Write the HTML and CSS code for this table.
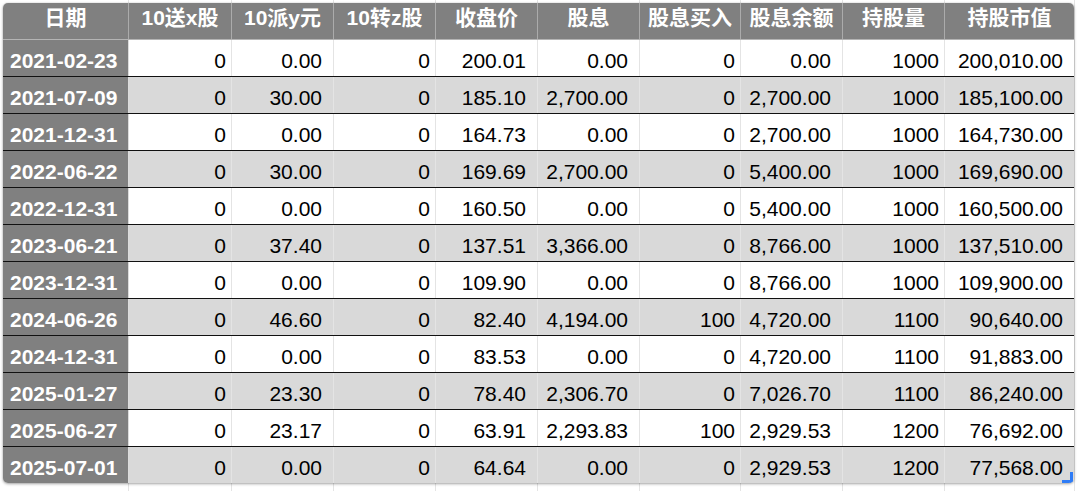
FILE: index.html
```html
<!DOCTYPE html>
<html lang="zh-CN">
<head>
<meta charset="utf-8">
<title>股息再投资表</title>
<link rel="stylesheet" href="styles.css">
</head>
<body>
<div class="page">
  <div class="sheet">
    <div class="head">
      <div class="h">日期</div><div class="h">10送x股</div><div class="h">10派y元</div><div class="h">10转z股</div><div class="h">收盘价</div><div class="h">股息</div><div class="h">股息买入</div><div class="h">股息余额</div><div class="h">持股量</div><div class="h">持股市值</div>
    </div>
    <div class="row first"><div class="d">2021-02-23</div><div class="c">0</div><div class="c">0.00</div><div class="c">0</div><div class="c">200.01</div><div class="c">0.00</div><div class="c">0</div><div class="c">0.00</div><div class="c">1000</div><div class="c">200,010.00</div></div>
    <div class="row alt"><div class="d">2021-07-09</div><div class="c">0</div><div class="c">30.00</div><div class="c">0</div><div class="c">185.10</div><div class="c">2,700.00</div><div class="c">0</div><div class="c">2,700.00</div><div class="c">1000</div><div class="c">185,100.00</div></div>
    <div class="row"><div class="d">2021-12-31</div><div class="c">0</div><div class="c">0.00</div><div class="c">0</div><div class="c">164.73</div><div class="c">0.00</div><div class="c">0</div><div class="c">2,700.00</div><div class="c">1000</div><div class="c">164,730.00</div></div>
    <div class="row alt"><div class="d">2022-06-22</div><div class="c">0</div><div class="c">30.00</div><div class="c">0</div><div class="c">169.69</div><div class="c">2,700.00</div><div class="c">0</div><div class="c">5,400.00</div><div class="c">1000</div><div class="c">169,690.00</div></div>
    <div class="row"><div class="d">2022-12-31</div><div class="c">0</div><div class="c">0.00</div><div class="c">0</div><div class="c">160.50</div><div class="c">0.00</div><div class="c">0</div><div class="c">5,400.00</div><div class="c">1000</div><div class="c">160,500.00</div></div>
    <div class="row alt"><div class="d">2023-06-21</div><div class="c">0</div><div class="c">37.40</div><div class="c">0</div><div class="c">137.51</div><div class="c">3,366.00</div><div class="c">0</div><div class="c">8,766.00</div><div class="c">1000</div><div class="c">137,510.00</div></div>
    <div class="row"><div class="d">2023-12-31</div><div class="c">0</div><div class="c">0.00</div><div class="c">0</div><div class="c">109.90</div><div class="c">0.00</div><div class="c">0</div><div class="c">8,766.00</div><div class="c">1000</div><div class="c">109,900.00</div></div>
    <div class="row alt"><div class="d">2024-06-26</div><div class="c">0</div><div class="c">46.60</div><div class="c">0</div><div class="c">82.40</div><div class="c">4,194.00</div><div class="c">100</div><div class="c">4,720.00</div><div class="c">1100</div><div class="c">90,640.00</div></div>
    <div class="row"><div class="d">2024-12-31</div><div class="c">0</div><div class="c">0.00</div><div class="c">0</div><div class="c">83.53</div><div class="c">0.00</div><div class="c">0</div><div class="c">4,720.00</div><div class="c">1100</div><div class="c">91,883.00</div></div>
    <div class="row alt"><div class="d">2025-01-27</div><div class="c">0</div><div class="c">23.30</div><div class="c">0</div><div class="c">78.40</div><div class="c">2,306.70</div><div class="c">0</div><div class="c">7,026.70</div><div class="c">1100</div><div class="c">86,240.00</div></div>
    <div class="row"><div class="d">2025-06-27</div><div class="c">0</div><div class="c">23.17</div><div class="c">0</div><div class="c">63.91</div><div class="c">2,293.83</div><div class="c">100</div><div class="c">2,929.53</div><div class="c">1200</div><div class="c">76,692.00</div></div>
    <div class="row alt"><div class="d">2025-07-01</div><div class="c">0</div><div class="c">0.00</div><div class="c">0</div><div class="c">64.64</div><div class="c">0.00</div><div class="c">0</div><div class="c">2,929.53</div><div class="c">1200</div><div class="c selected">77,568.00<span class="handle"></span></div></div>
  </div>
</div>
</body>
</html>
```

FILE: styles.css
```css
html, body {
  margin: 0;
  padding: 0;
}

body {
  width: 1080px;
  height: 491px;
  overflow: hidden;
  background-color: #ffffff;
  background-image:
    linear-gradient(#e4e4e4, #e4e4e4),
    linear-gradient(#e4e4e4, #e4e4e4),
    linear-gradient(#e4e4e4, #e4e4e4),
    linear-gradient(#e4e4e4, #e4e4e4),
    linear-gradient(#e4e4e4, #e4e4e4),
    linear-gradient(#e4e4e4, #e4e4e4),
    linear-gradient(#e4e4e4, #e4e4e4),
    linear-gradient(#e4e4e4, #e4e4e4),
    linear-gradient(#e4e4e4, #e4e4e4),
    linear-gradient(#e4e4e4, #e4e4e4);
  background-repeat: no-repeat;
  background-size: 1px 100%;
  background-position: 128px 0, 231px 0, 333px 0, 435px 0, 537px 0, 639px 0, 740px 0, 842px 0, 944px 0, 1074px 0;
  font-family: "Liberation Sans", "Noto Sans CJK SC", sans-serif;
  font-size: 21px;
  color: #000;
}

.page {
  padding: 3px 0 0 3px;
}

.sheet {
  --cols: 126px 103px 102px 102px 102px 102px 101px 102px 102px 129px;
  width: 1071px;
  border-radius: 5px;
  overflow: hidden;
  box-shadow: 0 1px 3px rgba(0, 0, 0, 0.35), 0 0 1px rgba(0, 0, 0, 0.25);
  background: #fff;
}

.head {
  display: grid;
  grid-template-columns: var(--cols);
  height: 36px;
  background: #808080;
  color: #fff;
  font-weight: bold;
}

.h {
  box-sizing: border-box;
  border-right: 1px solid #ababab;
  text-align: center;
  line-height: 24px;
  padding-top: 3px;
  white-space: nowrap;
}

.h:last-child {
  border-right: none;
}

.row {
  display: grid;
  grid-template-columns: var(--cols);
  height: 37px;
  box-sizing: border-box;
  border-top: 1px solid #111;
  background: #fff;
}

.row.first {
  border-top-color: #b4b4b4;
}

.row.alt {
  background: #d9d9d9;
}

.d,
.c {
  box-sizing: border-box;
  line-height: 24px;
  padding-top: 9px;
  white-space: nowrap;
}

.d {
  background: #808080;
  color: #fff;
  font-weight: bold;
  padding-left: 7px;
  border-right: 1px solid #dcdcdc;
}

.c {
  text-align: right;
  padding-right: 11px;
  border-right: 1px solid #e4e4e4;
}

.c:nth-child(2),
.c:nth-child(4),
.c:nth-child(7),
.c:nth-child(9) {
  padding-right: 5px;
}

.c:last-child {
  border-right: none;
}

.selected {
  position: relative;
}

.handle {
  position: absolute;
  right: 1px;
  bottom: 0;
  width: 8px;
  height: 8px;
  border-right: 3px solid #2f7cf6;
  border-bottom: 3px solid #2f7cf6;
}
```
